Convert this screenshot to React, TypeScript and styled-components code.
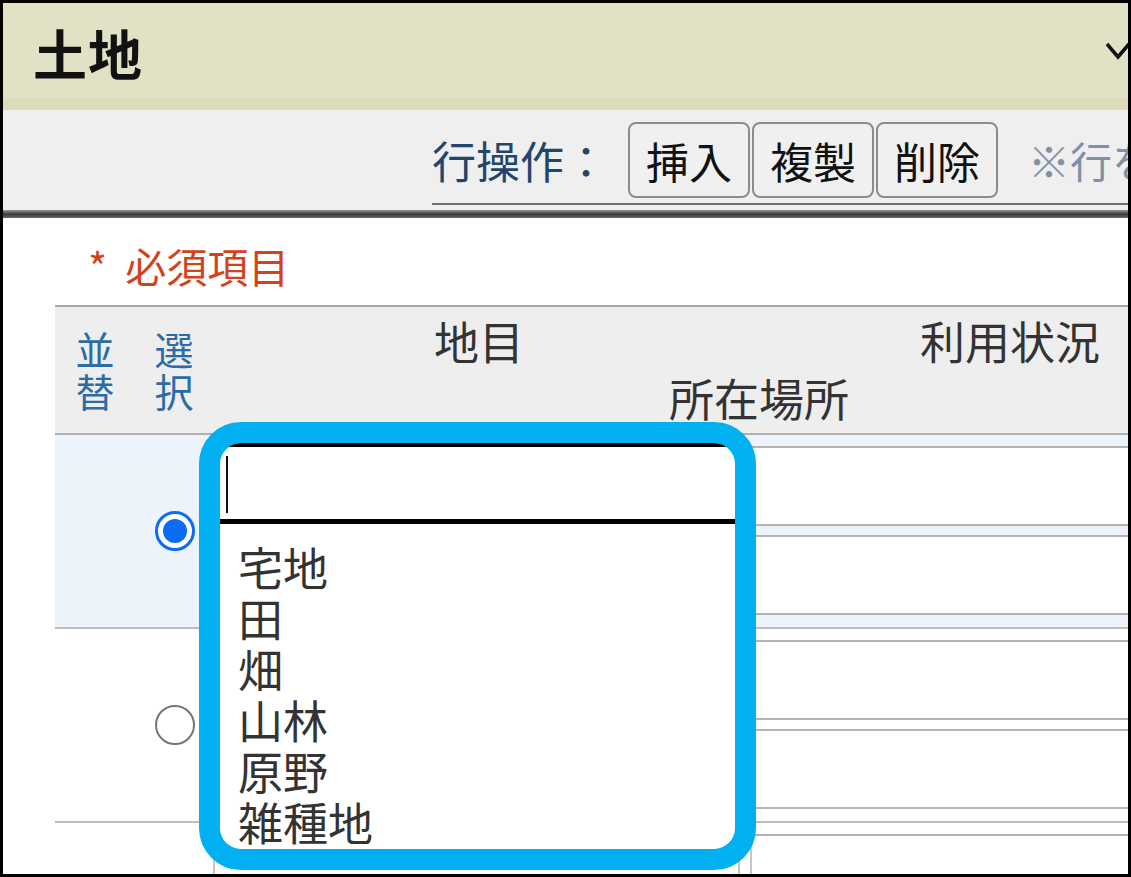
import styled, { createGlobalStyle } from "styled-components";

const GlobalStyle = createGlobalStyle`
  html, body {
    margin: 0;
    padding: 0;
    background: #ffffff;
  }
  body {
    font-family: "Noto Sans CJK JP", "Noto Sans", sans-serif;
  }
`;

const Frame = styled.div`
  position: relative;
  width: 1131px;
  height: 877px;
  box-sizing: border-box;
  border: 3px solid #000;
  overflow: hidden;
  background: #fff;
`;

const Header = styled.div`
  height: 107px;
  box-sizing: border-box;
  background: #e1e1c5;
  border-bottom: 12px solid #dcdcba;
  display: flex;
  align-items: center;
  justify-content: space-between;
  padding: 4px 0 0 30px;
`;

const Title = styled.h1`
  margin: 0;
  font-size: 54px;
  font-weight: 700;
  color: #111;
  letter-spacing: 1px;
`;

const Chevron = styled.svg`
  margin-right: -6px;
  margin-top: -4px;
`;

const Toolbar = styled.div`
  height: 100px;
  box-sizing: border-box;
  background: #efefef;
  padding: 12px 0 0 429px;
  display: flex;
`;

const ToolGroup = styled.div`
  flex: 1;
  display: flex;
  align-items: center;
  align-self: flex-start;
  gap: 2px;
  padding-bottom: 5px;
  border-bottom: 2px solid #707070;
  white-space: nowrap;
`;

const ToolLabel = styled.span`
  font-size: 44px;
  color: #23456c;
  margin-right: 18px;
  line-height: 1;
`;

const ToolButton = styled.button`
  width: 122px;
  height: 76px;
  box-sizing: border-box;
  border: 2px solid #8c8c8c;
  border-radius: 8px;
  background: #f0f0f0;
  font-family: inherit;
  font-size: 43px;
  color: #111;
  padding: 0;
  line-height: 1;
`;

const ToolNote = styled.span`
  margin-left: 28px;
  font-size: 42px;
  color: #8190a6;
  line-height: 1;
`;

const ShadowLine = styled.div`
  height: 8px;
  background: linear-gradient(#9a9a9a, #3a3a3a 50%, #6a6a6a);
`;

const Body = styled.div`
  padding-left: 52px;
`;

const Required = styled.div`
  margin: 22px 0 15px 33px;
  font-size: 41px;
  line-height: 50px;
  color: #d2431c;
  display: flex;
  gap: 18px;
`;

const Table = styled.div`
  width: 1250px;
`;

const HeadRow = styled.div`
  display: grid;
  grid-template-columns: 80px 78px 532px 1fr;
  grid-template-rows: 46px 46px;
  row-gap: 11px;
  padding: 11px 0 12px;
  background: #eeeeee;
  border-top: 2px solid #a9a9a9;
  border-bottom: 2px solid #b0b0b0;
`;

const StackLabel = styled.div<{ $col: number }>`
  grid-column: ${(p) => p.$col};
  grid-row: 1 / span 2;
  display: flex;
  flex-direction: column;
  align-items: center;
  padding-top: 9px;
  font-size: 39px;
  line-height: 42px;
  color: #2b6ca6;
`;

const HeadLabel = styled.div<{ $col: string; $row: number; $shift?: number }>`
  grid-column: ${(p) => p.$col};
  grid-row: ${(p) => p.$row};
  text-align: center;
  font-size: 45px;
  line-height: 46px;
  color: #333;
  padding-right: ${(p) => p.$shift ?? 0}px;
`;

const Row = styled.div<{ $selected?: boolean }>`
  display: grid;
  grid-template-columns: 80px 78px 1fr;
  background: ${(p) => (p.$selected ? "#edf3fb" : "#ffffff")};
  border-bottom: 2px solid #bdbdbd;
`;

const RadioCell = styled.div`
  grid-column: 2;
  display: flex;
  align-items: center;
  justify-content: center;
  padding-left: 2px;
`;

const Radio = styled.span<{ $checked?: boolean }>`
  width: 40px;
  height: 40px;
  box-sizing: border-box;
  border-radius: 50%;
  border: ${(p) => (p.$checked ? "3px solid #0b6cf5" : "2px solid #767676")};
  background: #fff;
  display: flex;
  align-items: center;
  justify-content: center;
  &::after {
    content: "";
    width: 24px;
    height: 24px;
    border-radius: 50%;
    background: ${(p) => (p.$checked ? "#0b6cf5" : "transparent")};
  }
`;

const Fields = styled.div`
  grid-column: 3;
  display: grid;
  grid-template-columns: 527px 1fr;
  grid-template-rows: 80px 80px;
  column-gap: 10px;
  row-gap: 9px;
  padding: 11px 0 12px;
`;

const Field = styled.div<{ $wide?: boolean }>`
  grid-column: ${(p) => (p.$wide ? "1 / span 2" : "auto")};
  box-sizing: border-box;
  background: #fff;
  border: 2px solid #c6c6c6;
  border-top-color: #b3b3b3;
  border-bottom-color: #b3b3b3;
`;

const Annotation = styled.div`
  position: absolute;
  left: 196px;
  top: 419px;
  width: 557px;
  height: 448px;
  box-sizing: border-box;
  border: 21px solid #00b0f0;
  border-radius: 42px;
  background: #fff;
  overflow: hidden;
`;

const ComboInput = styled.div`
  height: 81px;
  box-sizing: border-box;
  border-top: 4px solid #000;
  border-bottom: 5px solid #000;
  padding: 9px 0 0 6px;
`;

const Caret = styled.div`
  width: 2px;
  height: 57px;
  background: #111;
`;

const OptionList = styled.ul`
  list-style: none;
  margin: 0;
  padding: 17px 0 0 18px;
`;

const OptionItem = styled.li`
  font-size: 45px;
  line-height: 51px;
  color: #333;
`;

const options = ["宅地", "田", "畑", "山林", "原野", "雑種地"];

const rows = [{ selected: true }, { selected: false }, { selected: false }];

export default function App() {
  return (
    <>
      <GlobalStyle />
      <Frame>
        <Header>
          <Title>土地</Title>
          <Chevron width="30" height="22" viewBox="0 0 30 22">
            <polyline
              points="3,4 14,17 25,4"
              fill="none"
              stroke="#111"
              strokeWidth="3.5"
            />
          </Chevron>
        </Header>
        <Toolbar>
          <ToolGroup>
            <ToolLabel>行操作：</ToolLabel>
            <ToolButton>挿入</ToolButton>
            <ToolButton>複製</ToolButton>
            <ToolButton>削除</ToolButton>
            <ToolNote>※行を選択してください</ToolNote>
          </ToolGroup>
        </Toolbar>
        <ShadowLine />
        <Body>
          <Required>
            <span>*</span>
            <span>必須項目</span>
          </Required>
          <Table>
            <HeadRow>
              <StackLabel $col={1}>
                <span>並</span>
                <span>替</span>
              </StackLabel>
              <StackLabel $col={2}>
                <span>選</span>
                <span>択</span>
              </StackLabel>
              <HeadLabel $col="3" $row={1}>
                地目
              </HeadLabel>
              <HeadLabel $col="4" $row={1} $shift={30}>
                利用状況
              </HeadLabel>
              <HeadLabel $col="3 / span 2" $row={2}>
                所在場所
              </HeadLabel>
            </HeadRow>
            {rows.map((r, i) => (
              <Row key={i} $selected={r.selected}>
                <RadioCell>
                  <Radio $checked={r.selected} />
                </RadioCell>
                <Fields>
                  <Field />
                  <Field />
                  <Field $wide />
                </Fields>
              </Row>
            ))}
          </Table>
        </Body>
        <Annotation>
          <ComboInput>
            <Caret />
          </ComboInput>
          <OptionList>
            {options.map((o) => (
              <OptionItem key={o}>{o}</OptionItem>
            ))}
          </OptionList>
        </Annotation>
      </Frame>
    </>
  );
}
